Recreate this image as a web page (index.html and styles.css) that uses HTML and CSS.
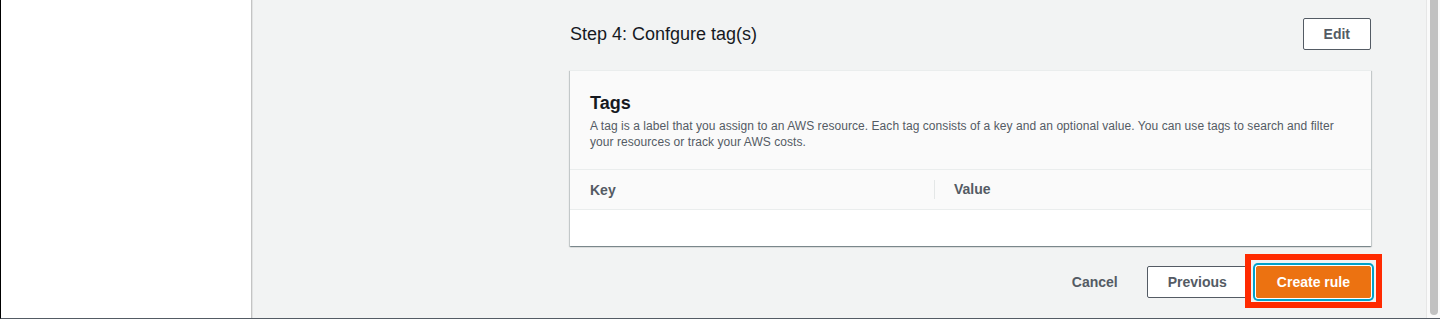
FILE: index.html
```html
<!DOCTYPE html>
<html lang="en">
<head>
  <meta charset="UTF-8">
  <meta name="viewport" content="width=device-width, initial-scale=1.0">
  <title>Create rule - Step 4</title>
  <link rel="stylesheet" href="styles.css">
</head>
<body>
  <div class="window">
    <aside class="sidebar"></aside>

    <main class="main">
      <div class="wizard">
        <div class="step-header">
          <h2>Step 4: Confgure tag(s)</h2>
          <button class="btn">Edit</button>
        </div>

        <section class="card">
          <div class="card-header">
            <h3>Tags</h3>
            <p>A tag is a label that you assign to an AWS resource. Each tag consists of a key and an optional value. You can use tags to search and filter your resources or track your AWS costs.</p>
          </div>
          <div class="tag-table">
            <div class="tag-head">
              <div class="col">Key</div>
              <div class="col col-value">Value</div>
            </div>
            <div class="tag-body"></div>
          </div>
        </section>

        <div class="actions">
          <button class="btn btn-link">Cancel</button>
          <button class="btn">Previous</button>
          <button class="btn btn-primary">Create rule</button>
        </div>
      </div>
    </main>

    <div class="scrollbar">
      <div class="thumb"></div>
    </div>
  </div>
</body>
</html>
```

FILE: styles.css
```css
* {
  margin: 0;
  padding: 0;
  box-sizing: border-box;
}

body {
  font-family: 'Liberation Sans', Arial, sans-serif;
  color: #16191f;
  background: #f2f3f3;
}

.window {
  display: flex;
  height: 319px;
  border-left: 1px solid #000;
  border-bottom: 1px solid #545b64;
}

.sidebar {
  width: 251px;
  flex-shrink: 0;
  background: #fff;
  border-right: 1px solid #c4c4c4;
}

.main {
  flex: 1;
  background: #f2f3f3;
  border-left: 1px solid #e2e3e3;
  padding-left: 317px;
}

.wizard {
  width: 801px;
}

.step-header {
  display: flex;
  align-items: center;
  justify-content: space-between;
  padding-top: 18px;
}

.step-header h2 {
  font-size: 18px;
  font-weight: 400;
  line-height: 22px;
  color: #16191f;
}

.btn {
  font-family: inherit;
  font-size: 14px;
  font-weight: 700;
  line-height: 22px;
  padding: 4px 20px;
  border: 1px solid #545b64;
  border-radius: 2px;
  background: #fff;
  color: #545b64;
  cursor: pointer;
}

.btn-link {
  border-color: transparent;
  background: transparent;
}

.btn-primary {
  position: relative;
  background: #ec7211;
  border-color: #ec7211;
  color: #fff;
  box-shadow: 0 0 0 1px #fff, 0 0 0 3px #00a1c9;
}

/* red highlight frame from the screenshot annotation */
.btn-primary::after {
  content: '';
  position: absolute;
  left: -12px;
  top: -13px;
  right: -12px;
  bottom: -11px;
  border: 6px solid #ff2a00;
  pointer-events: none;
}

.card {
  margin-top: 20px;
  background: #fff;
  box-shadow: 0 1px 1px 0 rgba(0, 28, 36, 0.3), 1px 1px 1px 0 rgba(0, 28, 36, 0.15), -1px 1px 1px 0 rgba(0, 28, 36, 0.15);
  border-top: 1px solid #eaeded;
}

.card-header {
  background: #fafafa;
  padding: 21px 20px 19px;
  border-bottom: 1px solid #eaeded;
}

.card-header h3 {
  font-size: 18px;
  font-weight: 700;
  line-height: 22px;
}

.card-header p {
  margin-top: 4px;
  font-size: 12px;
  line-height: 16px;
  color: #545b64;
  letter-spacing: 0.06px;
}

.tag-head {
  display: grid;
  grid-template-columns: 364px 1fr;
  align-items: center;
  height: 40px;
  background: #fafafa;
  border-bottom: 1px solid #eaeded;
  font-size: 14px;
  font-weight: 700;
  color: #545b64;
}

.tag-head .col {
  padding-left: 20px;
}

.tag-head .col-value {
  padding-left: 19px;
  border-left: 1px solid #e4e7e7;
  line-height: 19px;
}

.tag-body {
  height: 36px;
}

.actions {
  display: flex;
  justify-content: flex-end;
  gap: 8px;
  margin-top: 20px;
}

.scrollbar {
  width: 14px;
  display: flex;
  background: #fafafa;
  border-left: 1px solid #e6e6e6;
  padding: 0 2px 3px 3px;
}

.thumb {
  flex: 1;
  background: #c1c1c1;
  border-radius: 0 0 4px 4px;
}
```
